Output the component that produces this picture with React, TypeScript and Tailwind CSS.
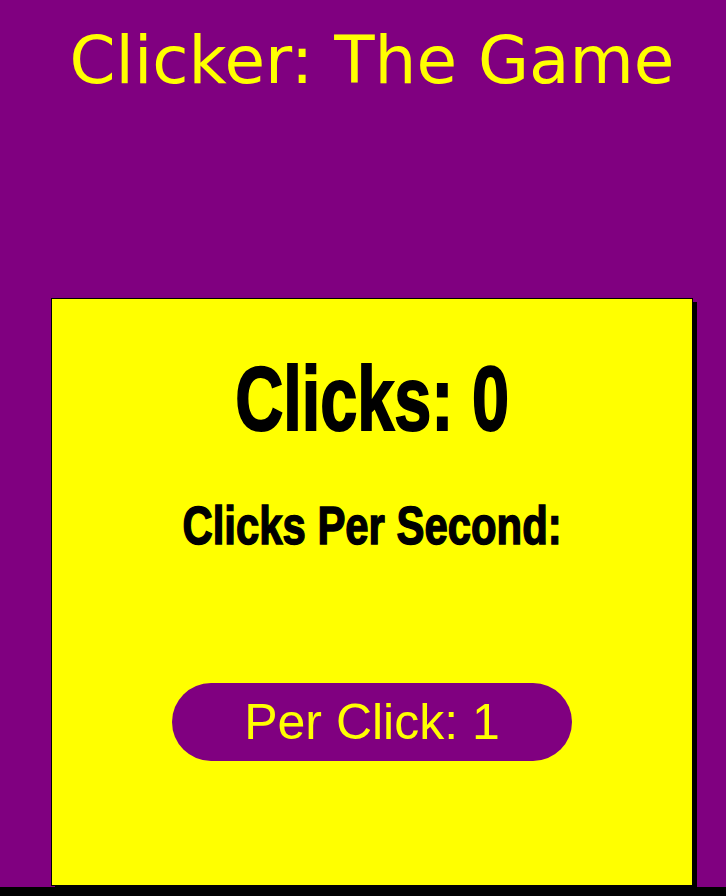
import React from 'react';

const App: React.FC = () => {
  const clicks = 0;
  const perClick = 1;

  return (
    <div className="min-h-[896px] w-full bg-black overflow-hidden">
      <div className="h-[887px] bg-[#800080]">
        <div className="ml-[51px] w-[642px]">
          <h1 className="pt-[22px] text-center text-[66px] leading-[78px] text-[#ffff00] font-['DejaVu_Sans',Verdana,sans-serif]">
            Clicker: The Game
          </h1>

          <div className="mt-[198px] h-[588px] border border-black bg-[#ffff00] shadow-[4px_4px_0_0_#000] flex flex-col items-center">
            <h2 className="mt-[50px] text-[90px] leading-[100px] font-bold text-black scale-x-[0.74] [-webkit-text-stroke:2px_black] font-['Liberation_Sans',Impact,sans-serif]">
              Clicks: {clicks}
            </h2>
            <h3 className="mt-[47px] text-[53px] leading-[60px] font-bold text-black scale-x-[0.79] [-webkit-text-stroke:1.5px_black] font-['Liberation_Sans',Impact,sans-serif]">
              Clicks Per Second:
            </h3>
            <button className="mt-[127px] w-[400px] h-[78px] rounded-full bg-[#800080] text-[#ffff00] text-[50px] font-['Liberation_Sans',Arial,sans-serif]">
              Per Click: {perClick}
            </button>
          </div>
        </div>
      </div>
    </div>
  );
};

export default App;
